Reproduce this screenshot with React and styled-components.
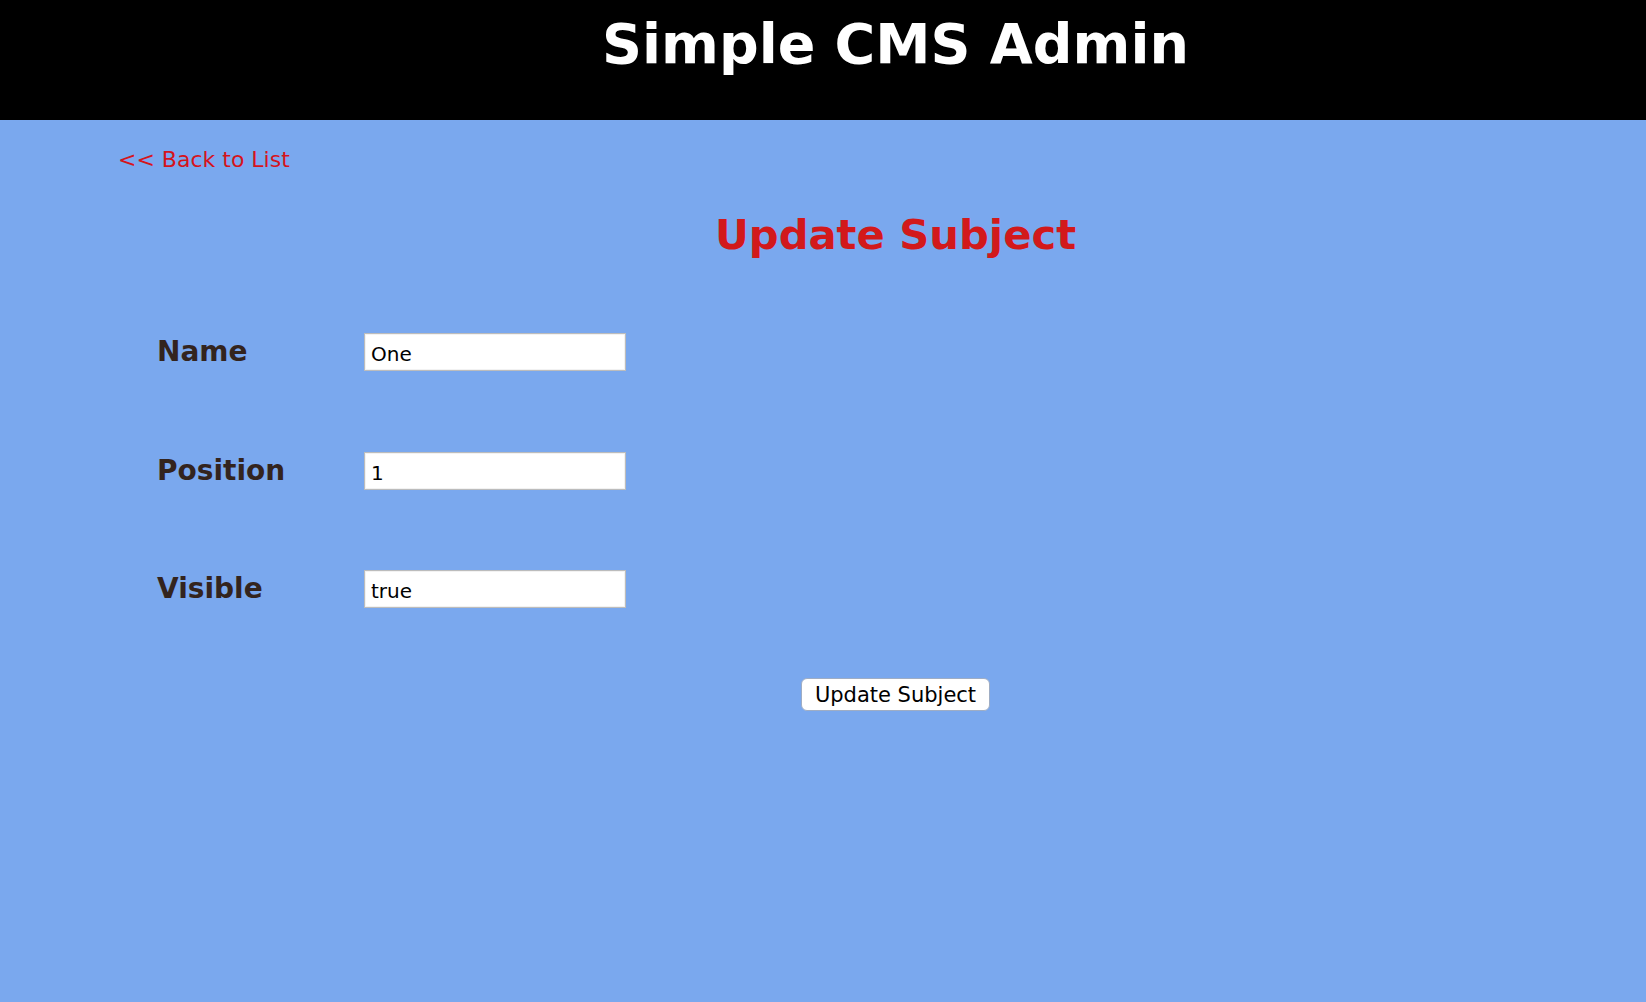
import React from "react";
import styled, { createGlobalStyle } from "styled-components";

const Global = createGlobalStyle`
  html, body { margin: 0; padding: 0; }
  body {
    background: #7aa8ee;
    font-family: "DejaVu Sans", Verdana, sans-serif;
    min-height: 1002px;
  }
`;

const Header = styled.header`
  background: #000;
  height: 120px;
  box-sizing: border-box;
  padding: 12px 0 0 145px;
`;

const SiteTitle = styled.h1`
  margin: 0;
  color: #fff;
  font-size: 55.5px;
  line-height: 64px;
  font-weight: bold;
  text-align: center;
`;

const Main = styled.main`
  padding: 27px 0 0 118px;
`;

const BackLink = styled.a`
  display: inline-block;
  color: #d5141c;
  font-size: 22px;
  line-height: 26px;
  text-decoration: none;
`;

const Content = styled.section`
  margin-left: 27px;
  margin-top: 37px;
`;

const PageTitle = styled.h2`
  margin: 0;
  color: #d2191b;
  font-size: 41.7px;
  line-height: 50px;
  font-weight: bold;
  text-align: center;
`;

const Form = styled.form`
  margin-top: 73px;
  display: flex;
  flex-direction: column;
  gap: 80.5px;
  padding-left: 12px;
`;

const Row = styled.div`
  display: grid;
  grid-template-columns: 207px 262px;
  align-items: start;
`;

const Label = styled.label`
  color: #33241e;
  font-size: 28px;
  font-weight: bold;
  line-height: 38px;
`;

const Input = styled.input`
  box-sizing: border-box;
  width: 262px;
  height: 38px;
  margin: 0;
  border: 1px solid #bcbcbc;
  box-shadow: inset 0 0 0 1px #f2f2f2;
  background: #fff;
  padding: 4px 6px 0;
  font-family: "DejaVu Sans", Verdana, sans-serif;
  font-size: 20px;
  color: #000;
  outline: none;
`;

const Actions = styled.div`
  display: flex;
  justify-content: center;
  margin-top: 70px;
`;

const Button = styled.button`
  box-sizing: border-box;
  width: 189px;
  height: 33px;
  padding: 0;
  background: #fff;
  border: 1px solid #9fadc4;
  border-radius: 6px;
  font-family: "DejaVu Sans", Verdana, sans-serif;
  font-size: 21px;
  color: #000;
`;

const fields = [
  { label: "Name", value: "One" },
  { label: "Position", value: "1" },
  { label: "Visible", value: "true" },
];

export default function App() {
  return (
    <>
      <Global />
      <Header>
        <SiteTitle>Simple CMS Admin</SiteTitle>
      </Header>
      <Main>
        <BackLink href="#">&lt;&lt; Back to List</BackLink>
        <Content>
          <PageTitle>Update Subject</PageTitle>
          <Form onSubmit={(e) => e.preventDefault()}>
            {fields.map((f) => (
              <Row key={f.label}>
                <Label>{f.label}</Label>
                <Input defaultValue={f.value} />
              </Row>
            ))}
          </Form>
          <Actions>
            <Button type="button">Update Subject</Button>
          </Actions>
        </Content>
      </Main>
    </>
  );
}
